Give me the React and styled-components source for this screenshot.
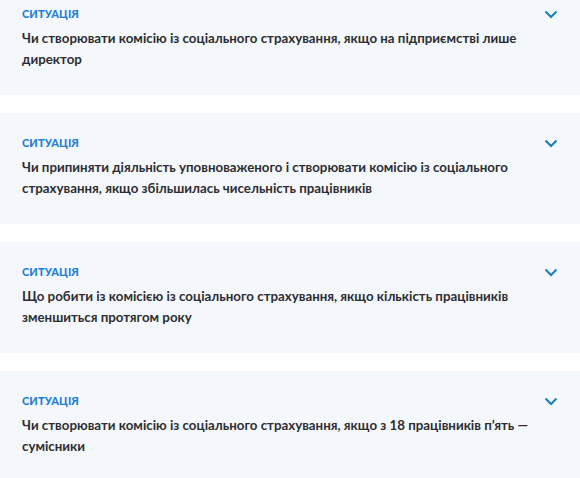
import React from "react";
import styled, { createGlobalStyle } from "styled-components";

const Global = createGlobalStyle`
  html, body { margin: 0; padding: 0; background: #ffffff; }
  body { font-family: "Lato", "Noto Sans", sans-serif; -webkit-font-smoothing: antialiased; }
`;

const List = styled.div`
  display: flex;
  flex-direction: column;
  gap: 18px;
  margin-top: -16px;
`;

const Card = styled.div`
  background: #f4f8fc;
  padding: 22px 22px 25px 22px;
  display: grid;
  grid-template-columns: 1fr 24px;
  column-gap: 0;
`;

const Body = styled.div`
  display: flex;
  flex-direction: column;
  gap: 6px;
`;

const Label = styled.div`
  font-size: 11px;
  line-height: 16px;
  font-weight: 900;
  letter-spacing: 0.1px;
  color: #1d7fd8;
  text-transform: uppercase;
`;

const Title = styled.div`
  font-size: 13.3px;
  line-height: 21px;
  font-weight: 700;
  color: #2d2d31;
`;

const Toggle = styled.div`
  display: flex;
  justify-content: flex-end;
  padding: 4px 0 0 0;
  color: #1a7dbd;
`;

const Chevron = () => (
  <svg width="14" height="9" viewBox="0 0 14 9" fill="none">
    <path d="M1.5 1.5 L7 7 L12.5 1.5" stroke="currentColor" strokeWidth="2" />
  </svg>
);

const items = [
  "Чи створювати комісію із соціального страхування, якщо на підприємстві лише директор",
  "Чи припиняти діяльність уповноваженого і створювати комісію із соціального страхування, якщо збільшилась чисельність працівників",
  "Що робити із комісією із соціального страхування, якщо кількість працівників зменшиться протягом року",
  "Чи створювати комісію із соціального страхування, якщо з 18 працівників п’ять — сумісники",
];

export default function App() {
  return (
    <>
      <Global />
      <List>
        {items.map((t) => (
          <Card key={t}>
            <Body>
              <Label>Ситуація</Label>
              <Title>{t}</Title>
            </Body>
            <Toggle>
              <Chevron />
            </Toggle>
          </Card>
        ))}
      </List>
    </>
  );
}
